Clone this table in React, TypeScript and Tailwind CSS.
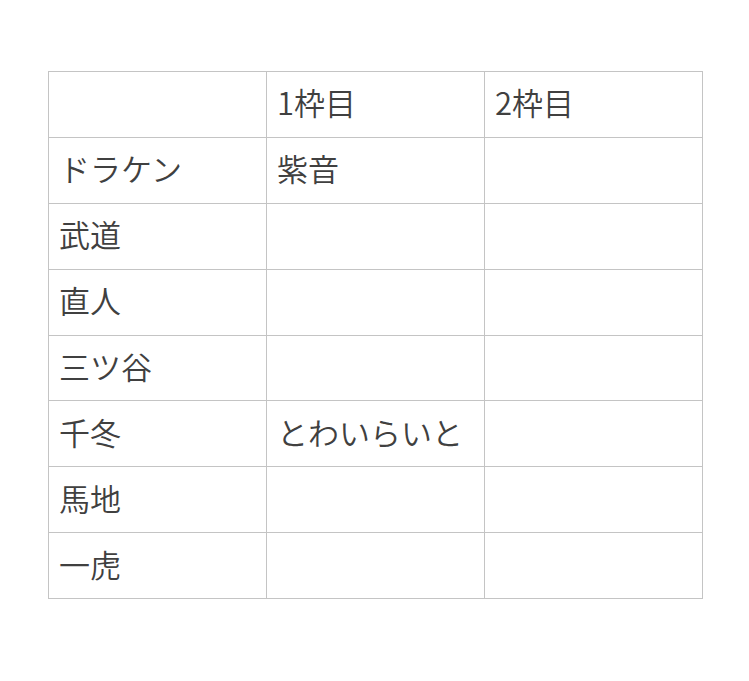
import React from 'react';

const rows: [string, string, string][] = [
  ['', '1枠目', '2枠目'],
  ['ドラケン', '紫音', ''],
  ['武道', '', ''],
  ['直人', '', ''],
  ['三ツ谷', '', ''],
  ['千冬', 'とわいらいと', ''],
  ['馬地', '', ''],
  ['一虎', '', ''],
];

const App: React.FC = () => {
  return (
    <div
      className="w-[749px] h-[681px] bg-white pt-[71px] pl-[48px]"
      style={{ fontFamily: '"Noto Sans CJK JP", "Noto Sans", sans-serif' }}
    >
      <table className="border-collapse table-fixed w-[652px] text-[31px] font-[350] text-[#404040]">
        <tbody>
          {rows.map((row, i) => (
            <tr key={i} className="h-[65.9px]">
              {row.map((cell, j) => (
                <td
                  key={j}
                  className="w-[218px] border border-[#c4c4c4] pl-[10px] pr-[8px] pb-[5px] align-middle leading-none"
                >
                  {cell}
                </td>
              ))}
            </tr>
          ))}
        </tbody>
      </table>
    </div>
  );
};

export default App;
